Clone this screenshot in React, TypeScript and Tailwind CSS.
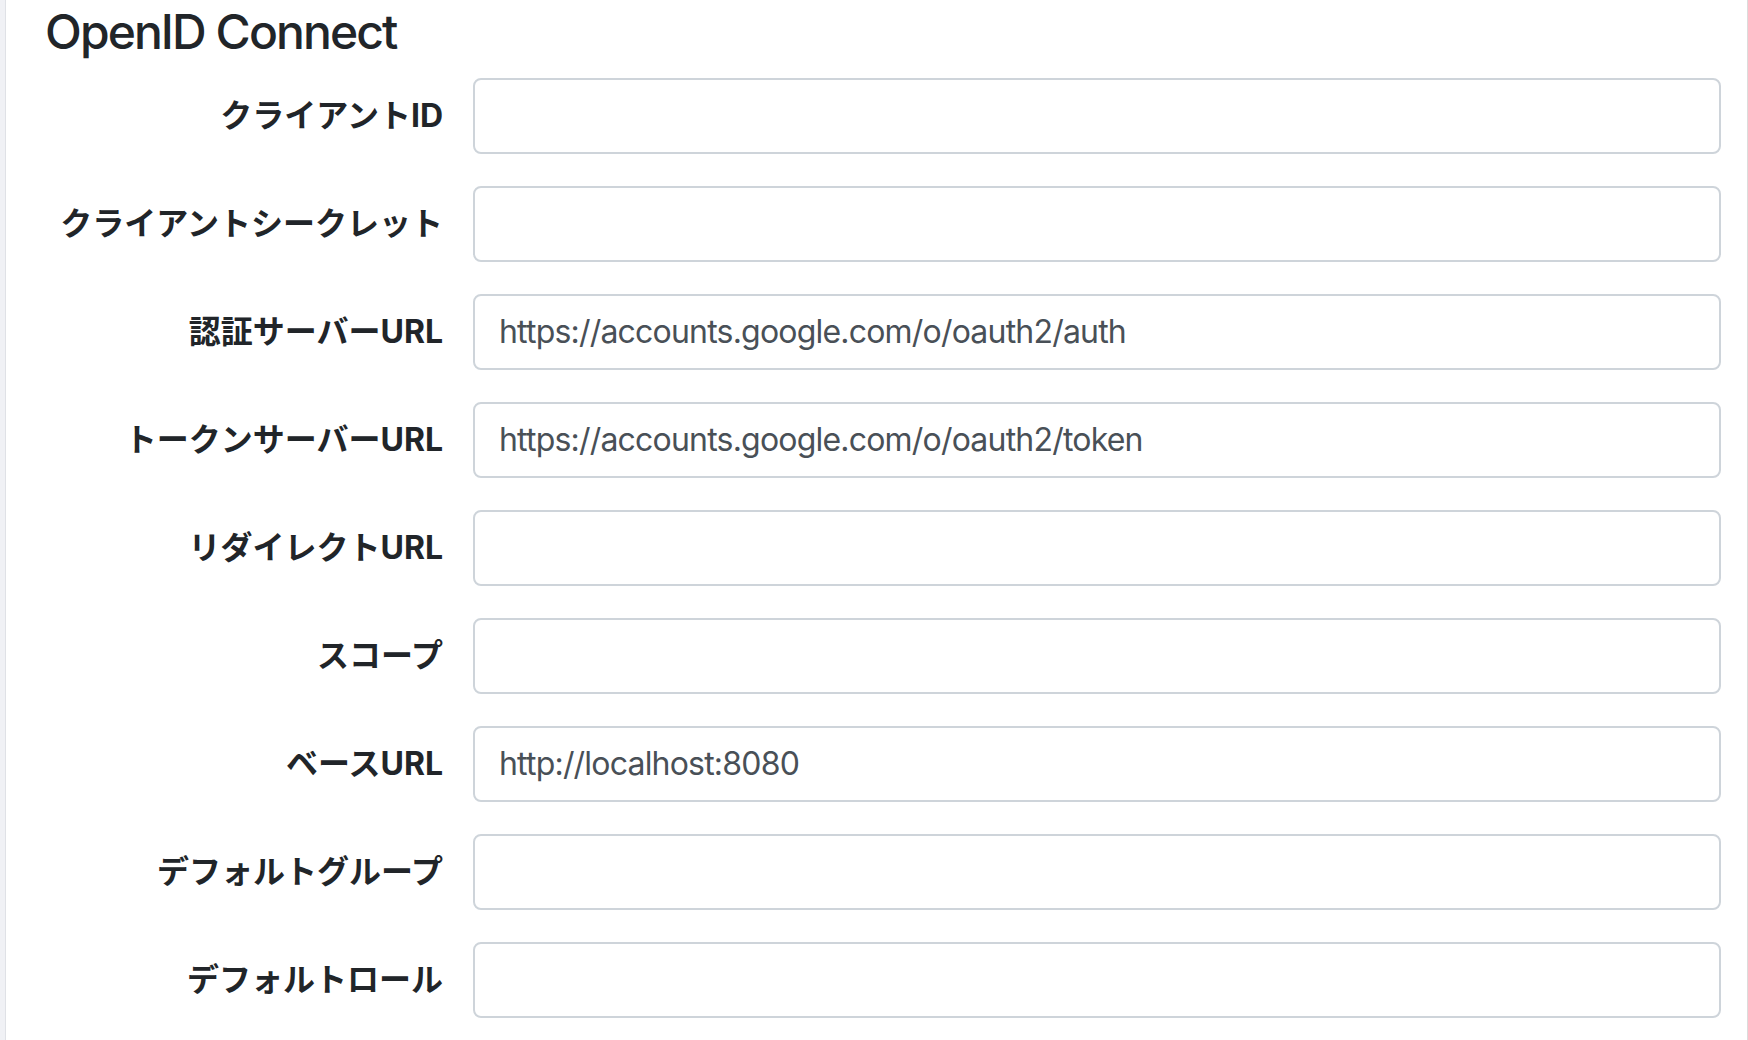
import React from 'react'

type Field = {
  label: string
  value?: string
}

const fields: Field[] = [
  { label: 'クライアントID' },
  { label: 'クライアントシークレット' },
  { label: '認証サーバーURL', value: 'https://accounts.google.com/o/oauth2/auth' },
  { label: 'トークンサーバーURL', value: 'https://accounts.google.com/o/oauth2/token' },
  { label: 'リダイレクトURL' },
  { label: 'スコープ' },
  { label: 'ベースURL', value: 'http://localhost:8080' },
  { label: 'デフォルトグループ' },
  { label: 'デフォルトロール' },
]

const FormRow: React.FC<{ field: Field }> = ({ field }) => {
  return (
    <div className="flex items-center mb-[32px]">
      <label className="w-[426px] shrink-0 pr-[15px] text-right text-[32px] font-bold leading-[1.5] text-[#212529]">
        {field.label}
      </label>
      <div className="flex-1 px-[15px]">
        <input
          type="text"
          defaultValue={field.value ?? ''}
          className="block w-full h-[76px] px-[24px] rounded-[8px] border-2 border-[#ced4da] bg-white text-[32px] tracking-[-0.025em] text-[#495057] outline-none"
        />
      </div>
    </div>
  )
}

export default function App() {
  return (
    <div
      className="flex h-[1040px] overflow-hidden bg-white"
      style={{ fontFamily: '"Inter", "Noto Sans CJK JP", sans-serif' }}
    >
      {/* sidebar edge */}
      <div className="w-[6px] shrink-0 bg-[#f0f1f5] border-r-[1px] border-[#dfe1e6]" />

      <main className="flex-1 pl-[26px] pr-[11px] border-r-[1px] border-[#dcdcdc]">
        <h4 className="mt-[3px] mb-[17px] ml-[13px] text-[48px] font-medium leading-[1.2] tracking-[-0.04em] text-[#212529]">
          OpenID Connect
        </h4>

        {fields.map((field) => (
          <FormRow key={field.label} field={field} />
        ))}
      </main>
    </div>
  )
}
